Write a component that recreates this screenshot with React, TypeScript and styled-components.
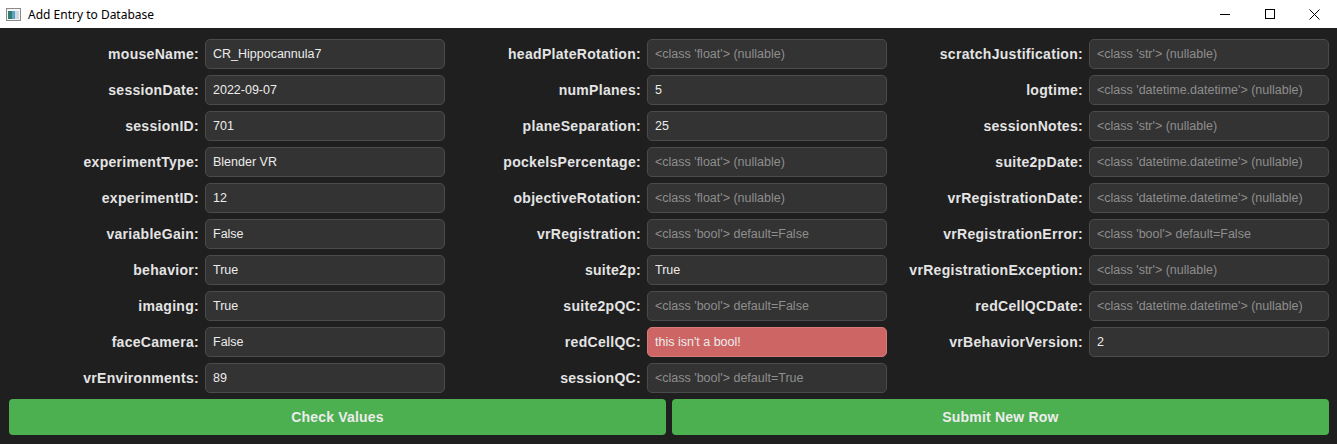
import React from 'react';
import styled, { createGlobalStyle } from 'styled-components';

const GlobalStyle = createGlobalStyle`
  html, body {
    margin: 0;
    padding: 0;
    background: #1f1f1f;
    font-family: 'Liberation Sans', Arial, sans-serif;
  }
  * { box-sizing: border-box; }
`;

const Window = styled.div`
  width: 1337px;
  height: 444px;
  display: flex;
  flex-direction: column;
  background: #1f1f1f;
  overflow: hidden;
`;

const TitleBar = styled.div`
  height: 28px;
  background: #ffffff;
  display: flex;
  align-items: center;
  padding-left: 6px;
  flex-shrink: 0;
`;

const TitleText = styled.span`
  font-family: 'Noto Sans', 'Liberation Sans', sans-serif;
  font-size: 12px;
  color: #000;
  margin-left: 7px;
  flex: 1;
`;

const WinControls = styled.div`
  display: flex;
  height: 100%;
`;

const WinButton = styled.div`
  width: 45px;
  height: 100%;
  display: flex;
  align-items: center;
  justify-content: center;
`;

const Body = styled.div`
  flex: 1;
  display: flex;
  flex-direction: column;
  gap: 6px;
  padding: 11px 8px 9px 9px;
`;

const Grid = styled.div`
  display: grid;
  grid-template-columns: repeat(3, 436px);
  column-gap: 6px;
  row-gap: 6px;
`;

const Field = styled.div`
  display: flex;
  align-items: center;
  gap: 6px;
  height: 30px;
`;

const Label = styled.label`
  flex: 1;
  text-align: right;
  font-size: 14px;
  font-weight: bold;
  letter-spacing: 0.3px;
  color: #e4e4e4;
  white-space: nowrap;
`;

const Input = styled.input<{ $error?: boolean }>`
  width: 240px;
  height: 30px;
  padding: 0 7px;
  border-radius: 5px;
  border: 1px solid ${(p) => (p.$error ? '#d77a7a' : '#4b4b4b')};
  background: ${(p) => (p.$error ? '#cd6565' : '#333333')};
  color: #ececec;
  font-family: 'Liberation Sans', Arial, sans-serif;
  font-size: 12.5px;
  outline: none;

  &::placeholder {
    color: #8e8e8e;
  }
`;

const ButtonRow = styled.div`
  display: flex;
  gap: 6px;
`;

const ActionButton = styled.button`
  flex: 1;
  height: 36px;
  border: none;
  border-radius: 4px;
  background: #4caf50;
  color: #ececec;
  font-family: 'Liberation Sans', Arial, sans-serif;
  font-size: 14px;
  font-weight: bold;
  letter-spacing: 0.2px;
`;

type FieldDef = { name: string; value?: string; hint?: string; error?: boolean };

const nullable = (t: string) => `<class '${t}'> (nullable)`;
const boolDef = (d: string) => `<class 'bool'> default=${d}`;

const columns: FieldDef[][] = [
  [
    { name: 'mouseName', value: 'CR_Hippocannula7' },
    { name: 'sessionDate', value: '2022-09-07' },
    { name: 'sessionID', value: '701' },
    { name: 'experimentType', value: 'Blender VR' },
    { name: 'experimentID', value: '12' },
    { name: 'variableGain', value: 'False' },
    { name: 'behavior', value: 'True' },
    { name: 'imaging', value: 'True' },
    { name: 'faceCamera', value: 'False' },
    { name: 'vrEnvironments', value: '89' },
  ],
  [
    { name: 'headPlateRotation', hint: nullable('float') },
    { name: 'numPlanes', value: '5' },
    { name: 'planeSeparation', value: '25' },
    { name: 'pockelsPercentage', hint: nullable('float') },
    { name: 'objectiveRotation', hint: nullable('float') },
    { name: 'vrRegistration', hint: boolDef('False') },
    { name: 'suite2p', value: 'True' },
    { name: 'suite2pQC', hint: boolDef('False') },
    { name: 'redCellQC', value: "this isn't a bool!", error: true },
    { name: 'sessionQC', hint: boolDef('True') },
  ],
  [
    { name: 'scratchJustification', hint: nullable('str') },
    { name: 'logtime', hint: nullable('datetime.datetime') },
    { name: 'sessionNotes', hint: nullable('str') },
    { name: 'suite2pDate', hint: nullable('datetime.datetime') },
    { name: 'vrRegistrationDate', hint: nullable('datetime.datetime') },
    { name: 'vrRegistrationError', hint: boolDef('False') },
    { name: 'vrRegistrationException', hint: nullable('str') },
    { name: 'redCellQCDate', hint: nullable('datetime.datetime') },
    { name: 'vrBehaviorVersion', value: '2' },
  ],
];

// grid fills row by row, so interleave the columns
const cells: (FieldDef | null)[] = [];
for (let r = 0; r < 10; r++) {
  for (let c = 0; c < 3; c++) cells.push(columns[c][r] ?? null);
}

const AppIcon = () => (
  <svg width="15" height="13" viewBox="0 0 15 13">
    <rect x="0.5" y="0.5" width="14" height="12" fill="#f4f4f4" stroke="#8a8a8a" />
    <rect x="2" y="3" width="4" height="8" fill="#2e7d6e" />
    <rect x="6" y="3" width="3" height="8" fill="#5aa0c8" />
    <rect x="9" y="3" width="4" height="8" fill="#cfd8dc" />
  </svg>
);

export default function App() {
  return (
    <>
      <GlobalStyle />
      <Window>
        <TitleBar>
          <AppIcon />
          <TitleText>Add Entry to Database</TitleText>
          <WinControls>
            <WinButton>
              <svg width="10" height="10" viewBox="0 0 10 10">
                <line x1="0" y1="5.5" x2="10" y2="5.5" stroke="#000" strokeWidth="1" />
              </svg>
            </WinButton>
            <WinButton>
              <svg width="10" height="10" viewBox="0 0 10 10">
                <rect x="0.5" y="0.5" width="9" height="9" fill="none" stroke="#000" strokeWidth="1" />
              </svg>
            </WinButton>
            <WinButton>
              <svg width="11" height="11" viewBox="0 0 11 11">
                <path d="M0.5 0.5 L10.5 10.5 M10.5 0.5 L0.5 10.5" stroke="#000" strokeWidth="1" />
              </svg>
            </WinButton>
          </WinControls>
        </TitleBar>
        <Body>
          <Grid>
            {cells.map((f, i) =>
              f ? (
                <Field key={f.name}>
                  <Label>{f.name}:</Label>
                  <Input
                    readOnly
                    $error={f.error}
                    value={f.value ?? ''}
                    placeholder={f.hint}
                  />
                </Field>
              ) : (
                <Field key={'empty' + i} />
              )
            )}
          </Grid>
          <ButtonRow>
            <ActionButton>Check Values</ActionButton>
            <ActionButton>Submit New Row</ActionButton>
          </ButtonRow>
        </Body>
      </Window>
    </>
  );
}
